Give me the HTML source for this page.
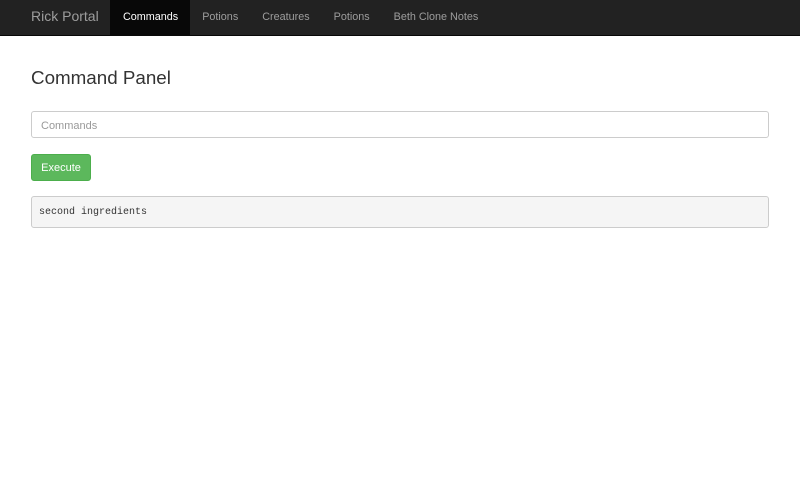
<!DOCTYPE html>
<html><head><style>
*{box-sizing:border-box}
body{margin:0;font-family:"Liberation Sans",sans-serif;background:#fff;color:#333;width:800px;height:480px;overflow:hidden}
.nav{height:36px;background:#222;border-bottom:1px solid #080808;position:relative}
.brand{position:absolute;left:31px;top:0;line-height:33px;font-size:14px;color:#9d9d9d}
.items{position:absolute;left:110px;top:0;display:flex;height:35px}
.items a{display:block;padding:0 12px;line-height:34px;font-size:10.8px;color:#9d9d9d;text-decoration:none}
.items a.act{background:#080808;color:#fff;padding:0 12px 0 13px}
h1{position:absolute;left:31px;top:67px;margin:0;font-size:18.8px;font-weight:normal;color:#333}
.inp{position:absolute;left:31px;top:111px;width:738px;height:27px;border:1px solid #ccc;border-radius:3px;font-size:11px;color:#999;padding-left:9px;line-height:28px}
.btn{position:absolute;left:31px;top:154px;width:60px;height:27px;background:#5cb85c;border:1px solid #4cae4c;border-radius:3px;color:#fff;font-size:11px;text-align:center;line-height:27px}
.pre{position:absolute;left:31px;top:196px;width:738px;height:32px;background:#f5f5f5;border:1px solid #ccc;border-radius:3px;font-family:"Liberation Mono",monospace;font-size:10px;padding-left:7px;line-height:31px;color:#333}
</style></head><body>
<div class="nav"><div class="brand">Rick Portal</div>
<div class="items"><a class="act">Commands</a><a>Potions</a><a>Creatures</a><a>Potions</a><a>Beth Clone Notes</a></div></div>
<h1>Command Panel</h1>
<div class="inp">Commands</div>
<div class="btn">Execute</div>
<div class="pre">second ingredients</div>
</body></html>
